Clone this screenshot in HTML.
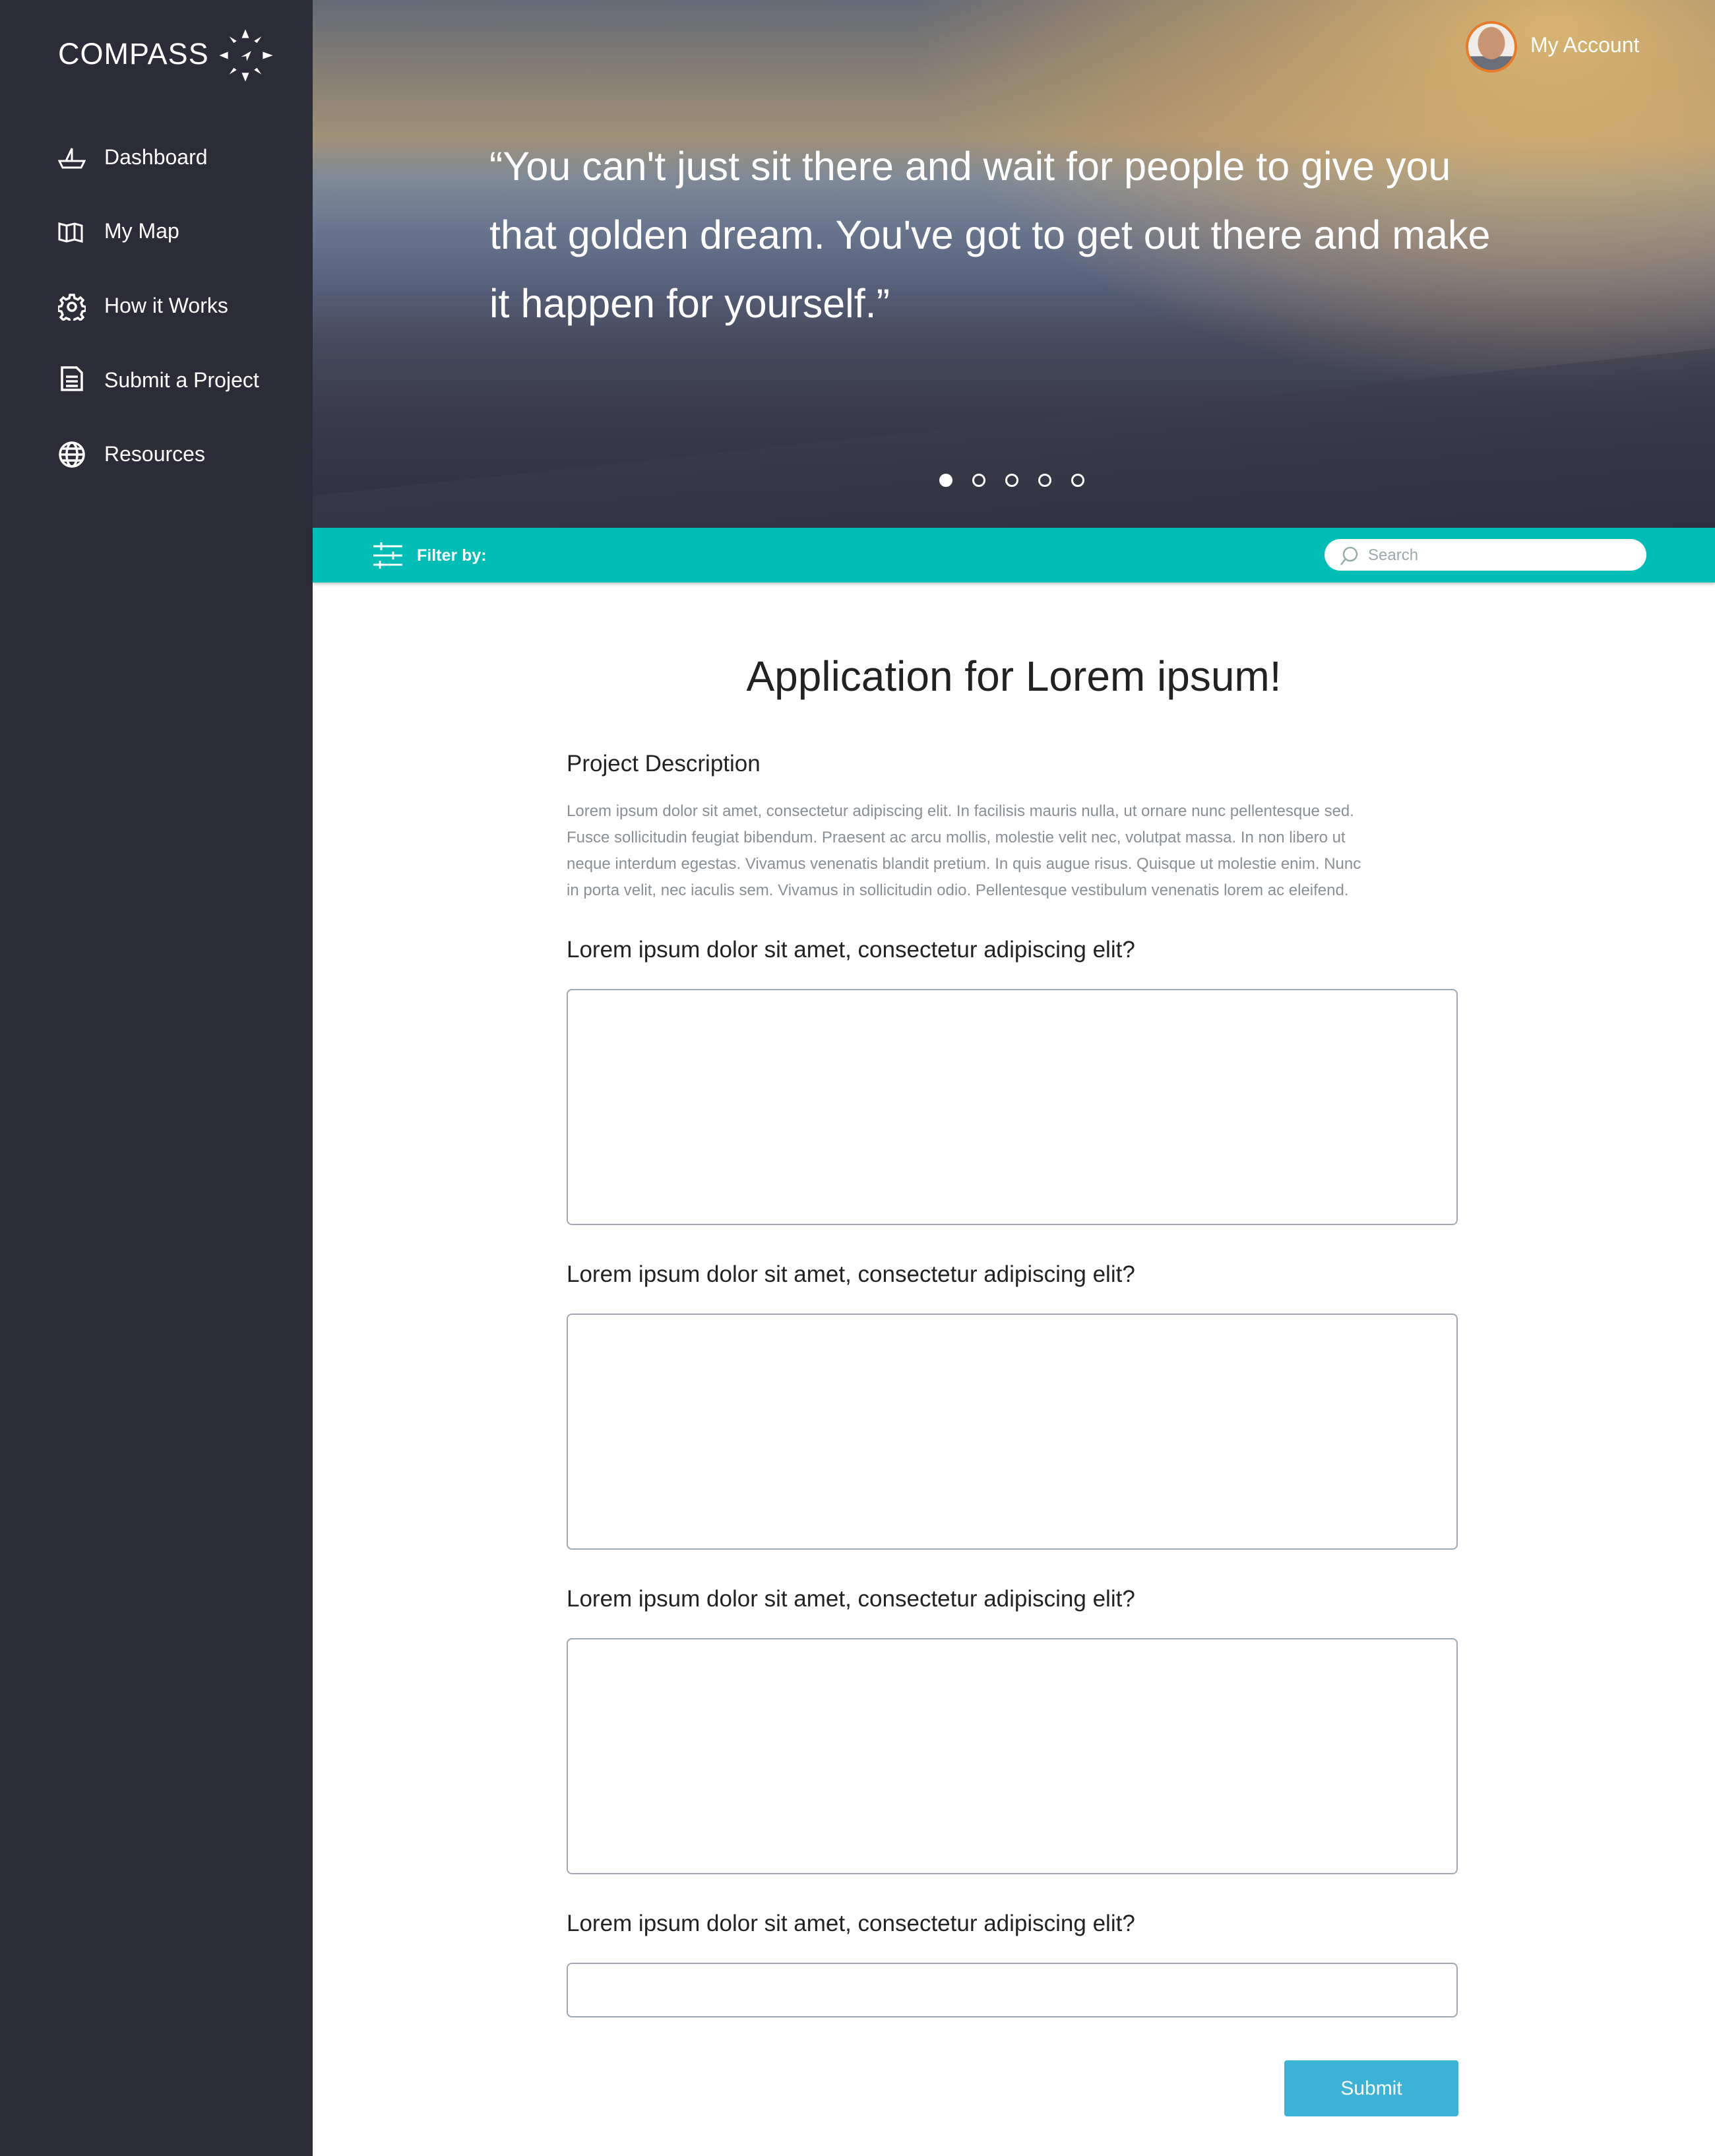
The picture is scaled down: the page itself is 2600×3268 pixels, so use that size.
<!DOCTYPE html>
<html><head><meta charset="utf-8"><style>
*{margin:0;padding:0;box-sizing:border-box}
body{width:2600px;height:3268px;background:#fff;font-family:"Liberation Sans",sans-serif;position:relative;overflow:hidden}
.side{position:absolute;left:0;top:0;width:474px;height:3268px;background:#2c2c39}
.logo{position:absolute;left:88px;top:56px;color:#fff;font-size:45px;letter-spacing:1px}
.nav{position:absolute;left:158px;color:#fff;font-size:32px}
.ico{position:absolute;left:88px}
.hero{position:absolute;left:474px;top:0;width:2126px;height:800px;overflow:hidden;
background:linear-gradient(180deg,#646a76 0%,#8a8274 16%,#a09078 26%,#7e8a98 34%,#6c7890 42%,#5a6580 52%,#474b5f 64%,#383a4b 80%,#2e2f3d 100%)}
.glow{position:absolute;left:900px;top:-200px;width:1400px;height:800px;background:radial-gradient(ellipse at 70% 30%,rgba(235,190,110,.85),rgba(220,170,100,.4) 45%,rgba(0,0,0,0) 70%)}
.sand{position:absolute;left:0;top:520px;width:2200px;height:400px;background:linear-gradient(180deg,rgba(60,60,75,.5),#2e2f3d);transform:skewY(-6deg);transform-origin:right top}
.quote{position:absolute;left:268px;top:200px;color:#fff;font-size:61px;line-height:104px;white-space:nowrap}
.dots{position:absolute;top:718px;left:950px}
.dots span{display:inline-block;width:20px;height:20px;border:3px solid #fff;border-radius:50%;margin-right:30px}
.acct{position:absolute;left:1846px;top:50px;color:#fff;font-size:32px}
.av{position:absolute;left:1748px;top:32px;width:78px;height:78px;border-radius:50%;border:4px solid #e87a2a;background:radial-gradient(ellipse 30% 36% at 50% 42%,#c99474 0 95%,transparent 100%),linear-gradient(180deg,#f0ece8 70%,#6a6e78 71%)}
.bar{position:absolute;left:474px;top:800px;width:2126px;height:83px;background:#01bdb6;box-shadow:0 3px 4px rgba(0,0,0,.2)}
.search{position:absolute;left:1534px;top:17px;width:488px;height:48px;background:#fff;border-radius:24px;color:#9aa;font-size:24px;padding:11px 0 0 66px}
.q{position:absolute;left:859px;font-size:35px;color:#222}
.box{position:absolute;left:859px;width:1351px;border:2px solid #9fa8b0;border-radius:8px}
</style></head><body>
<div class="side">
<div class="logo">COMPASS</div>
<svg style="position:absolute;left:328px;top:40px" width="88" height="88" viewBox="0 0 80 80" fill="#fff"><polygon points="40,4 45,16 35,16"/><polygon points="40,76 45,64 35,64"/><polygon points="4,40 16,35 16,45"/><polygon points="78,40 64,35 64,45"/><polygon points="18,14 28,20 24,23"/><polygon points="62,14 52,20 56,23"/><polygon points="18,66 28,60 24,57"/><polygon points="62,66 52,60 56,57"/><polygon points="34,42 48,34 42,48 41,41"/></svg>
<svg class="ico" style="top:222px" width="42" height="34" viewBox="0 0 42 34" fill="none" stroke="#fff" stroke-width="3"><path d="M2 22h38l-5 10H7z"/><path d="M21 22V3l-9 19"/></svg><div class="nav" style="top:220px">Dashboard</div>
<svg class="ico" style="top:336px" width="38" height="32" viewBox="0 0 38 32" fill="none" stroke="#fff" stroke-width="3"><path d="M2 3l11 3 12-3 11 3v24l-11-3-12 3-11-3z M13 6v24 M25 3v24"/></svg><div class="nav" style="top:332px">My Map</div>
<svg class="ico" style="top:444px" width="42" height="42" viewBox="0 0 42 42" fill="none" stroke="#fff" stroke-width="3.5"><circle cx="21" cy="21" r="6"/><path d="M18 3h6l1 5 5 2 4-3 4 4-3 4 2 5 5 1v6l-5 1-2 5 3 4-4 4-4-3-5 2-1 5h-6l-1-5-5-2-4 3-4-4 3-4-2-5-5-1v-6l5-1 2-5-3-4 4-4 4 3 5-2z"/></svg><div class="nav" style="top:445px">How it Works</div>
<svg class="ico" style="top:555px;left:92px" width="34" height="38" viewBox="0 0 34 38" fill="none" stroke="#fff" stroke-width="3.5"><path d="M2 2h22l8 8v26H2z M8 16h18 M8 23h18 M8 30h18"/></svg><div class="nav" style="top:558px">Submit a Project</div>
<svg class="ico" style="top:668px" width="42" height="42" viewBox="0 0 42 42" fill="none" stroke="#fff" stroke-width="3.5"><circle cx="21" cy="21" r="18"/><ellipse cx="21" cy="21" rx="8" ry="18"/><path d="M3 21h36 M6 12h30 M6 30h30"/></svg><div class="nav" style="top:670px">Resources</div>
</div>
<div class="hero"><div class="glow"></div><div class="sand"></div>
<div class="quote">“You can't just sit there and wait for people to give you<br>that golden dream. You've got to get out there and make<br>it happen for yourself.”</div>
<div class="dots"><span style="background:#fff"></span><span></span><span></span><span></span><span></span></div>
<div class="av"></div><div class="acct">My Account</div>
</div>
<div class="bar">
<svg style="position:absolute;left:92px;top:22px" width="44" height="40" viewBox="0 0 44 40" stroke="#fff" stroke-width="3"><path d="M0 6h44 M0 20h44 M0 34h44 M12 0v12 M30 14v12 M10 28v12"/></svg>
<div style="position:absolute;left:158px;top:28px;color:#fff;font-size:25px;font-weight:bold">Filter by:</div>
<div class="search">Search<svg style="position:absolute;left:22px;top:10px" width="32" height="32" viewBox="0 0 32 32" fill="none" stroke="#9aa" stroke-width="2.5"><circle cx="17" cy="13" r="10"/><path d="M10 20L3 29"/></svg></div>
</div>
<div style="position:absolute;left:474px;width:2126px;top:988px;text-align:center;font-size:64px;color:#222">Application for Lorem ipsum!</div>
<div class="q" style="top:1138px;font-size:35px">Project Description</div>
<div style="position:absolute;left:859px;top:1210px;font-size:24px;line-height:40px;color:#8a8f96;white-space:nowrap">Lorem ipsum dolor sit amet, consectetur adipiscing elit. In facilisis mauris nulla, ut ornare nunc pellentesque sed.<br>Fusce sollicitudin feugiat bibendum. Praesent ac arcu mollis, molestie velit nec, volutpat massa. In non libero ut<br>neque interdum egestas. Vivamus venenatis blandit pretium. In quis augue risus. Quisque ut molestie enim. Nunc<br>in porta velit, nec iaculis sem. Vivamus in sollicitudin odio. Pellentesque vestibulum venenatis lorem ac eleifend.</div>
<div class="q" style="top:1420px">Lorem ipsum dolor sit amet, consectetur adipiscing elit?</div>
<div class="box" style="top:1499px;height:358px"></div>
<div class="q" style="top:1912px">Lorem ipsum dolor sit amet, consectetur adipiscing elit?</div>
<div class="box" style="top:1991px;height:358px"></div>
<div class="q" style="top:2404px">Lorem ipsum dolor sit amet, consectetur adipiscing elit?</div>
<div class="box" style="top:2483px;height:358px"></div>
<div class="q" style="top:2896px">Lorem ipsum dolor sit amet, consectetur adipiscing elit?</div>
<div class="box" style="top:2975px;height:83px"></div>
<div style="position:absolute;left:1947px;top:3123px;width:264px;height:85px;background:#3cb3d6;border-radius:4px;color:#fff;font-size:30px;text-align:center;line-height:85px">Submit</div>
</body></html>
